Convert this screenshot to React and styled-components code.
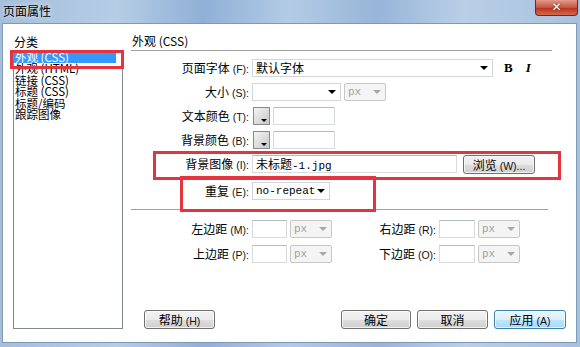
import React from "react";
import styled, { createGlobalStyle } from "styled-components";

const Global = createGlobalStyle`
  html, body { margin: 0; padding: 0; background: #fff; }
  body { font-family: "Noto Sans CJK SC", "Liberation Sans", sans-serif; font-size: 12px; color: #000; }
`;

const Window = styled.div`
  width: 580px;
  height: 347px;
  box-sizing: border-box;
  display: flex;
  flex-direction: column;
  padding: 0 3px 4px 2px;
  background: linear-gradient(90deg, #a4bedb 0%, #b6cde6 20%, #8fb0d6 35%, #b3cbe5 50%, #97b5d8 65%, #b9cfe7 80%, #a7c1dd 100%);
`;

const TitleBar = styled.div`
  height: 23px;
  flex: none;
  display: flex;
  align-items: flex-start;
  justify-content: space-between;
`;

const Title = styled.span`
  margin: 4px 0 0 1px;
  font-size: 12px;
  line-height: 14px;
  color: #000;
  text-shadow: 0 0 6px rgba(255,255,255,0.9);
`;

const CloseBtn = styled.div`
  width: 43px;
  height: 16px;
  margin-right: -1px;
  box-sizing: border-box;
  border: 1px solid #6b2a25;
  border-top: none;
  border-radius: 0 0 4px 4px;
  background: linear-gradient(#e39a8c, #c8543f 50%, #b8301c 51%, #d46a4d);
  color: #fff;
  font: bold 12px/15px "DejaVu Sans", sans-serif;
  text-align: center;
  text-shadow: 0 0 2px #5a1810;
`;

const Body = styled.div`
  flex: 1;
  position: relative;
  display: flex;
  background: #fff;
  border: 1px solid #7f98b5;
  box-sizing: border-box;
`;

const Sidebar = styled.div`
  width: 110px;
  margin-left: 10px;
  padding: 11px 0 13px;
  display: flex;
  flex-direction: column;
`;

const SmallHead = styled.div`
  line-height: 13px;
  font-size: 12px;
  padding-left: 1px;
`;

const ListBox = styled.div`
  margin-top: 2px;
  flex: 1;
  border: 1px solid #828790;
  box-sizing: border-box;
  padding-top: 1px;
`;

const ListItem = styled.div`
  line-height: 11.4px;
  height: 11.4px;
  font-size: 11.5px;
  padding-left: 1px;
  margin-right: 6px;
  white-space: nowrap;
  background: ${p => (p.$selected ? "#3399ff" : "transparent")};
  color: ${p => (p.$selected ? "#fff" : "#000")};
`;

const Panel = styled.div`
  flex: 1;
  margin-left: 8px;
  margin-right: 10px;
  padding: 10px 0 13px;
  display: flex;
  flex-direction: column;
`;

const Separator = styled.div`
  height: 0;
  border-top: 1px solid #a0a0a0;
  border-bottom: 1px solid #fff;
  margin-top: ${p => p.$top}px;
  margin-right: ${p => p.$right}px;
`;

const Form = styled.div`
  margin-top: 7px;
  display: flex;
  flex-direction: column;
  gap: 6px;
`;

const Row = styled.div`
  display: flex;
  align-items: center;
  height: 18px;
  gap: 3px;
  margin-top: ${p => p.$top || 0}px;
`;

const Label = styled.span`
  width: ${p => p.$w || 118}px;
  flex: none;
  text-align: right;
  white-space: nowrap;
  font-size: 12px;
  line-height: 18px;
`;

const Key = styled.span`
  font-family: "Liberation Sans", sans-serif;
  font-size: 10.5px;
  margin-left: 3px;
  color: #111;
`;

const Select = styled.div`
  width: ${p => p.$w}px;
  height: 18px;
  box-sizing: border-box;
  flex: none;
  display: flex;
  align-items: center;
  justify-content: space-between;
  padding: 0 4px 0 3px;
  border: 1px solid ${p => (p.$disabled ? "#c7c7c7" : "#d2d6dc")};
  border-radius: ${p => (p.$disabled ? "2px" : "0")};
  background: ${p => (p.$disabled ? "#f4f4f4" : "#fff")};
  color: ${p => (p.$disabled ? "#a0a0a0" : "#000")};
  font-family: ${p => (p.$mono ? '"Liberation Mono", monospace' : "inherit")};
  font-size: ${p => (p.$mono ? "11px" : "12px")};
  line-height: 16px;
`;

const Arrow = styled.span`
  width: 0;
  height: 0;
  border-left: 4px solid transparent;
  border-right: 4px solid transparent;
  border-top: 4px solid ${p => (p.$disabled ? "#a8a8a8" : "#000")};
`;

const TextBox = styled.div`
  width: ${p => p.$w}px;
  height: 18px;
  box-sizing: border-box;
  flex: none;
  border: 1px solid #d7dbe0;
  border-top-color: #b5bac2;
  background: #fff;
  padding-left: 3px;
  font-size: 12px;
  line-height: 16px;
  white-space: nowrap;
`;

const Mono = styled.span`
  font-family: "Liberation Mono", monospace;
  font-size: 11px;
`;

const Swatch = styled.div`
  width: 17px;
  height: 18px;
  margin-left: 1px;
  box-sizing: border-box;
  flex: none;
  border: 1px solid #8a8a8a;
  background: linear-gradient(135deg, #f4f4f4, #c8c8c8);
  position: relative;
  &::after {
    content: "";
    position: absolute;
    right: 2px;
    bottom: 2px;
    border-left: 3px solid transparent;
    border-right: 3px solid transparent;
    border-top: 3px solid #000;
  }
`;

const StyleBtn = styled.span`
  font-family: "Liberation Serif", serif;
  font-size: 13px;
  font-weight: bold;
  font-style: ${p => (p.$italic ? "italic" : "normal")};
  margin-left: ${p => p.$ml}px;
`;

const Button = styled.div`
  width: ${p => p.$w || 71}px;
  height: 19px;
  box-sizing: border-box;
  flex: none;
  margin-left: ${p => p.$ml || 0}px;
  border: 1px solid ${p => (p.$primary ? "#3c7fb1" : "#707070")};
  border-radius: 3px;
  background: ${p =>
    p.$primary
      ? "linear-gradient(#eaf6fd, #d9f0fc 50%, #bee6fd 51%, #a7d9f5)"
      : "linear-gradient(#f2f2f2, #ebebeb 50%, #dddddd 51%, #cfcfcf)"};
  box-shadow: inset 0 0 0 1px rgba(255,255,255,0.7);
  text-align: center;
  font-size: 12px;
  line-height: 17px;
  white-space: nowrap;
`;

const MarginGrid = styled.div`
  margin-top: 9px;
  display: grid;
  grid-template-columns: 118px 35px 42px 101px 36px 42px;
  grid-auto-rows: 18px;
  column-gap: 3px;
  row-gap: 7px;
  align-items: center;
`;

const Footer = styled.div`
  margin-top: auto;
  display: flex;
  gap: 6px;
  padding-left: 13px;
`;

const Spacer = styled.div`
  flex: 1;
`;

const Annotation = styled.div`
  position: absolute;
  left: ${p => p.$x}px;
  top: ${p => p.$y}px;
  width: ${p => p.$w}px;
  height: ${p => p.$h}px;
  box-sizing: border-box;
  border: 3px solid #e4343f;
  pointer-events: none;
`;

const items = ["外观 (CSS)", "外观 (HTML)", "链接 (CSS)", "标题 (CSS)", "标题/编码", "跟踪图像"];

const Lbl = ({ zh, k, w }) => (
  <Label $w={w}>
    {zh}
    <Key>({k}):</Key>
  </Label>
);

const PxSelect = () => (
  <Select $w={42} $disabled $mono>
    <span>px</span>
    <Arrow $disabled />
  </Select>
);

export default function App() {
  return (
    <>
      <Global />
      <Window>
        <TitleBar>
          <Title>页面属性</Title>
          <CloseBtn>✕</CloseBtn>
        </TitleBar>
        <Body>
          <Sidebar>
            <SmallHead>分类</SmallHead>
            <ListBox>
              {items.map((t, i) => (
                <ListItem key={t} $selected={i === 0}>{t}</ListItem>
              ))}
            </ListBox>
          </Sidebar>
          <Panel>
            <SmallHead>外观 (CSS)</SmallHead>
            <Separator $top={3} $right={14} />
            <Form>
              <Row>
                <Lbl zh="页面字体" k="F" />
                <Select $w={241}>
                  <span>默认字体</span>
                  <Arrow />
                </Select>
                <StyleBtn $ml={8}>B</StyleBtn>
                <StyleBtn $ml={10} $italic>I</StyleBtn>
              </Row>
              <Row>
                <Lbl zh="大小" k="S" />
                <Select $w={89}>
                  <span />
                  <Arrow />
                </Select>
                <PxSelect />
              </Row>
              <Row>
                <Lbl zh="文本颜色" k="T" />
                <Swatch />
                <TextBox $w={62} />
              </Row>
              <Row>
                <Lbl zh="背景颜色" k="B" />
                <Swatch />
                <TextBox $w={62} />
              </Row>
              <Row>
                <Lbl zh="背景图像" k="I" />
                <TextBox $w={205}>
                  未标题<Mono>-1.jpg</Mono>
                </TextBox>
                <Button $w={72} $ml={3}>
                  浏览<Key>(W)...</Key>
                </Button>
              </Row>
              <Row $top={3}>
                <Lbl zh="重复" k="E" />
                <Select $w={78} $mono>
                  <span>no-repeat</span>
                  <Arrow />
                </Select>
              </Row>
            </Form>
            <Separator $top={9} $right={18} />
            <MarginGrid>
              <Lbl zh="左边距" k="M" />
              <TextBox $w={35} />
              <PxSelect />
              <Lbl zh="右边距" k="R" w={101} />
              <TextBox $w={36} />
              <PxSelect />
              <Lbl zh="上边距" k="P" />
              <TextBox $w={35} />
              <PxSelect />
              <Lbl zh="下边距" k="O" w={101} />
              <TextBox $w={36} />
              <PxSelect />
            </MarginGrid>
            <Footer>
              <Button>帮助<Key>(H)</Key></Button>
              <Spacer />
              <Button $w={70}>确定</Button>
              <Button>取消</Button>
              <Button $w={72} $primary>应用<Key>(A)</Key></Button>
            </Footer>
          </Panel>
          <Annotation $x={7} $y={26} $w={114} $h={19} />
          <Annotation $x={150} $y={127} $w={408} $h={29} />
          <Annotation $x={177} $y={152} $w={196} $h={36} />
        </Body>
      </Window>
    </>
  );
}
